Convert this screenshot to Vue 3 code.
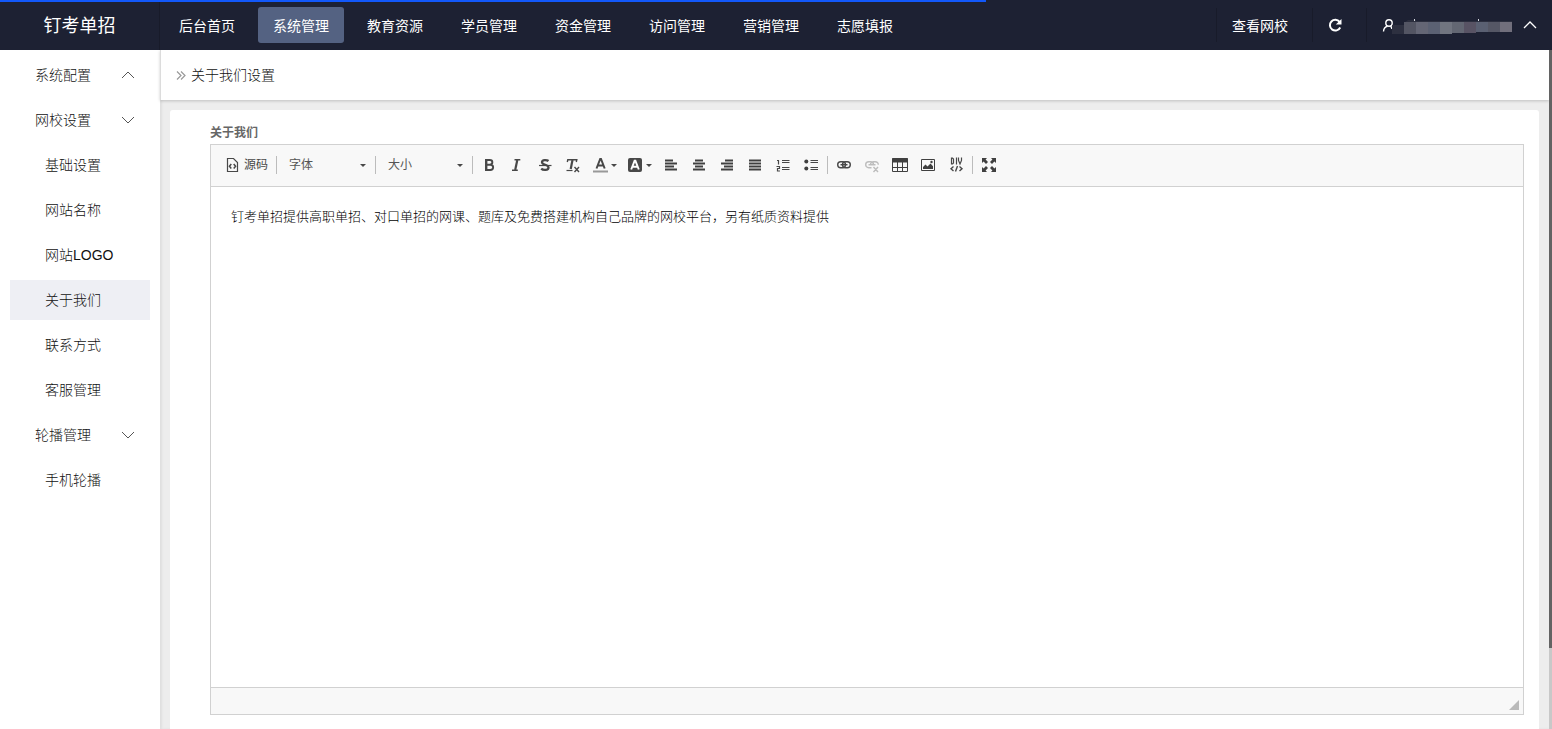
<script setup>
import { ref } from 'vue'

const topNav = ['后台首页', '系统管理', '教育资源', '学员管理', '资金管理', '访问管理', '营销管理', '志愿填报']
const activeTop = ref('系统管理')

const groups = ref([
  { name: '系统配置', arrow: 'up', items: [] },
  { name: '网校设置', arrow: 'down', items: ['基础设置', '网站名称', '网站LOGO', '关于我们', '联系方式', '客服管理'] },
  { name: '轮播管理', arrow: 'down', items: ['手机轮播'] }
])
const activeItem = ref('关于我们')

const progress = ref(63.5)

const alignTools = [
  { label: '左对齐', d: 'M2 3.5h8M2 6.5h12M2 9.5h9M2 12.5h12' },
  { label: '居中', d: 'M4 3.5h8M2 6.5h12M4 9.5h8M2 12.5h12' },
  { label: '右对齐', d: 'M6 3.5h8M2 6.5h12M5 9.5h9M2 12.5h12' },
  { label: '两端对齐', d: 'M2 3.5h12M2 6.5h12M2 9.5h12M2 12.5h12' }
]

/* Masked user name blocks: x, y, width, height, colour */
const mask = [
  [0, 7, 12, 9, '#2d3040'], [12, 4, 12, 12, '#535563'], [24, 4, 12, 12, '#646675'],
  [36, 4, 12, 12, '#5b6173'], [48, 4, 12, 12, '#717580'], [60, 4, 12, 11, '#636773'],
  [72, 4, 12, 11, '#585364'], [84, 4, 12, 10, '#5a6072'], [96, 4, 12, 10, '#555765'],
  [108, 4, 12, 10, '#716f7c']
]
</script>

<template>
  <div class="page">
    <header class="topbar">
      <div class="progress" :style="{ width: progress + '%' }"></div>
      <div class="brand">钉考单招</div>
      <nav class="topnav" aria-label="主导航">
        <a v-for="n in topNav" :key="n" href="#" :class="{ active: n === activeTop }" @click.prevent="activeTop = n">{{ n }}</a>
      </nav>
      <div class="actions">
        <a href="#" class="action view">查看网校</a>
        <button type="button" class="action reload" aria-label="刷新">
          <svg width="16" height="16" viewBox="0 0 16 16">
            <path d="M12.6 4.900A5.400 5.400 0 1 0 13.200 10.500" fill="none" stroke="#fff" stroke-width="2" />
            <path d="M14.500 2v5.600H8.800z" fill="#fff" />
          </svg>
        </button>
        <button type="button" class="action user" aria-label="用户菜单">
          <svg class="person" width="12" height="14" viewBox="0 0 12 14" fill="none" stroke="#fff" stroke-width="1.4">
            <circle cx="7" cy="5" r="3.200" />
            <path d="M1.500 13.500c.2-3 1.600-4.600 4-5.200M8.500 8c.8.8 1.200 1.600 1.400 3" />
          </svg>
          <svg class="mask" width="120" height="18" viewBox="0 0 120 18">
            <path d="M12 5l4-3h8v1h96v2z" fill="#2b2e3e" />
            <rect v-for="(m, i) in mask" :key="i" :x="m[0]" :y="m[1]" :width="m[2]" :height="m[3]" :fill="m[4]" />
            <path d="M22.500 1v2M86.500 1v2" stroke="#d5d7dd" />
          </svg>
          <svg class="caret" width="14" height="8" viewBox="0 0 14 8" fill="none" stroke="#fff" stroke-width="1.300">
            <path d="M1 7l6-6 6 6" />
          </svg>
        </button>
      </div>
    </header>

    <div class="body">
      <nav class="sidebar" aria-label="侧栏">
        <template v-for="g in groups" :key="g.name">
          <button type="button" class="group">
            <span>{{ g.name }}</span>
            <svg width="14" height="8" viewBox="0 0 14 8" fill="none" stroke="#555">
              <path :d="g.arrow === 'up' ? 'M1 7l6-6 6 6' : 'M1 1l6 6 6-6'" />
            </svg>
          </button>
          <a v-for="it in g.items" :key="it" href="#" class="item" :class="{ active: it === activeItem }" @click.prevent="activeItem = it">{{ it }}</a>
        </template>
      </nav>

      <main class="main">
        <div class="crumb">
          <svg width="10" height="12" viewBox="0 0 10 12" fill="none" stroke="#999" stroke-width="1.200">
            <path d="M1 2.500l4 4-4 4M5 2.500l4 4-4 4" />
          </svg>
          <h1>关于我们设置</h1>
        </div>

        <div class="content">
          <section class="card">
            <div id="about-label" class="label">关于我们</div>
            <div class="editor">
              <div class="toolbar" role="toolbar" aria-label="编辑器工具栏">
                <button type="button" class="source">
                  <svg width="16" height="16" viewBox="0 0 16 16" fill="none" stroke="#484848">
                    <path d="M3.500 1.500h6l4 4v9h-10z" stroke-width="1.200" />
                    <path d="M7.300 7L5.400 9.200l1.900 2.200M9.700 7l1.900 2.200-1.900 2.200" stroke-width="1.500" />
                  </svg>
                  源码
                </button>
                <i class="sep"></i>
                <div class="combo">
                  <select aria-label="字体"><option>字体</option></select>
                  <svg class="drop" width="6" height="3" viewBox="0 0 6 3"><path d="M0 0h6L3 3z" /></svg>
                </div>
                <i class="sep"></i>
                <div class="combo size">
                  <select aria-label="大小"><option>大小</option></select>
                  <svg class="drop" width="6" height="3" viewBox="0 0 6 3"><path d="M0 0h6L3 3z" /></svg>
                </div>
                <i class="sep"></i>
                <button type="button" class="tool" aria-label="加粗">
                  <svg width="16" height="16" viewBox="0 0 16 16" fill="none" stroke="#484848">
                    <path d="M5.200 3v10" stroke-width="2.400" />
                    <path d="M4 3h4.800c3.400 0 3.400 4.700 0 4.700H5H9.300c3.800 0 3.800 5.300 0 5.300H4" stroke-width="1.900" />
                  </svg>
                </button>
                <button type="button" class="tool" aria-label="倾斜">
                  <svg width="16" height="16" viewBox="0 0 16 16" fill="none" stroke="#484848">
                    <path d="M8.300 3L6.200 13" stroke-width="2.200" /><path d="M5.500 2.700h5.800M3 13.300h5.800" stroke-width="1.400" />
                  </svg>
                </button>
                <button type="button" class="tool" aria-label="删除线">
                  <svg width="16" height="16" viewBox="0 0 16 16" fill="none" stroke="#484848">
                    <path d="M11.500 4C10 2.800 5 2.300 5 5.200c0 2.900 6.500 2.200 6.500 5.200 0 3.300-5.500 3-7.300 1.300" stroke-width="2.300" />
                    <path d="M2 8.500h12.500" stroke-width="1.200" />
                  </svg>
                </button>
                <button type="button" class="tool" aria-label="清除格式">
                  <svg width="16" height="16" viewBox="0 0 16 16" fill="none" stroke="#484848">
                    <path d="M7.500 3L5.700 12" stroke-width="2.200" /><path d="M2.300 5l.5-2.300h9l-.5 2.300" stroke-width="1.400" />
                    <path d="M1.500 13.500h6" stroke-width="1.200" /><path d="M9.500 10l4.500 5M14 10l-4.500 5" stroke-width="1.400" />
                  </svg>
                </button>
                <button type="button" class="tool wide" aria-label="文本颜色">
                  <svg width="16" height="16" viewBox="0 0 16 16" fill="none" stroke="#484848">
                    <path d="M3.500 11.500L7.200 2h.8l3.700 9.500M5 8.500h5.500" stroke-width="2" />
                    <path d="M0 14.500h15" stroke="#999" stroke-width="2" />
                  </svg>
                  <svg class="drop" width="6" height="3" viewBox="0 0 6 3"><path d="M0 0h6L3 3z" /></svg>
                </button>
                <button type="button" class="tool wide" aria-label="背景颜色">
                  <svg width="16" height="16" viewBox="0 0 16 16" fill="none">
                    <rect x="0" y="1" width="14" height="14" rx="2" fill="#484848" />
                    <path d="M3.200 12.500L6.600 3.800h.8l3.400 8.700M4.500 9.800h5" stroke="#fff" stroke-width="1.900" />
                  </svg>
                  <svg class="drop" width="6" height="3" viewBox="0 0 6 3"><path d="M0 0h6L3 3z" /></svg>
                </button>
                <button v-for="a in alignTools" :key="a.label" type="button" class="tool" :aria-label="a.label">
                  <svg width="16" height="16" viewBox="0 0 16 16"><path :d="a.d" stroke="#404040" stroke-width="2" /></svg>
                </button>
                <button type="button" class="tool" aria-label="编号列表">
                  <svg width="16" height="16" viewBox="0 0 16 16" fill="none" stroke="#484848">
                    <path d="M7 3.500h7.500M7 5.500h7.500M7 10.500h7.500M7 12.500h7.500" />
                    <path d="M2 3.500h1.500v4M1.500 9.500H4.500v2h-2v2.500H5" stroke-width="1.200" />
                  </svg>
                </button>
                <button type="button" class="tool" aria-label="项目列表">
                  <svg width="16" height="16" viewBox="0 0 16 16">
                    <path d="M7.500 3.500h7.500M7.500 5.500h7.500M7.500 10.500h7.500M7.500 12.500h7.500" stroke="#484848" />
                    <circle cx="3.300" cy="4.500" r="2" fill="#404040" /><circle cx="3.300" cy="11.500" r="2" fill="#404040" />
                  </svg>
                </button>
                <i class="sep"></i>
                <button type="button" class="tool" aria-label="插入链接">
                  <svg width="16" height="16" viewBox="0 0 16 16" fill="none" stroke="#484848" stroke-width="1.400">
                    <rect x="1.700" y="4.700" width="7.800" height="6" rx="3" /><rect x="6.500" y="4.700" width="7.800" height="6" rx="3" />
                    <path d="M4.500 7.700h7" />
                  </svg>
                </button>
                <button type="button" class="tool" aria-label="取消链接" disabled>
                  <svg width="16" height="16" viewBox="0 0 16 16" fill="none" stroke="#bdbdbd" stroke-width="1.400">
                    <path d="M7.500 10.700H4.700a3 3 0 0 1 0-6h1.800a3 3 0 0 1 3 3M6.500 7.700a3 3 0 0 1 3-3h1.800a3 3 0 0 1 3 3M4.500 7.700h7M9.500 10l4.500 5M14 10l-4.500 5" />
                  </svg>
                </button>
                <button type="button" class="tool" aria-label="表格">
                  <svg width="16" height="16" viewBox="0 0 16 16" fill="none" stroke="#404040">
                    <path d="M.5 1.500h15v13H.5zM.5 10.500h15M5.500 5v9.500M10.500 5v9.500" /><path d="M0 3.500h16" stroke-width="4" />
                  </svg>
                </button>
                <button type="button" class="tool" aria-label="图像">
                  <svg width="16" height="16" viewBox="0 0 16 16">
                    <path d="M1.500 2.500h13v11h-13z" fill="none" stroke="#404040" />
                    <path d="M3 12V10l2.500-2.500 2 2L10.500 6.500l2.500 2.800V12z" fill="#404040" /><circle cx="11.500" cy="5" r="1.200" fill="#404040" />
                  </svg>
                </button>
                <button type="button" class="tool" aria-label="创建 DIV 容器">
                  <svg width="16" height="16" viewBox="0 0 16 16" fill="none" stroke="#484848" stroke-width="1.200">
                    <path d="M3.500 1v6h1l1-1V2l-1-1zM8.500 .5v7M10.500 .5v3L12 7l1.500-3.500v-3" />
                    <path d="M5.500 9.500L3 11.700 5.500 14M11.500 9.500l2.500 2.200-2.500 2.300M9.500 9L7.500 14.500" stroke-width="1.400" />
                  </svg>
                </button>
                <i class="sep"></i>
                <button type="button" class="tool" aria-label="最大化">
                  <svg width="16" height="16" viewBox="0 0 16 16">
                    <path d="M1 1h5L4.600 2.600 7 5 5 7 2.600 4.600 1 6zM15 1v5l-1.600-1.400L11 7 9 5l2.400-2.400L10 1zM1 15v-5l1.600 1.400L5 9l2 2-2.400 2.400L6 15zM15 15h-5l1.400-1.600L9 11l2-2 2.400 2.400L15 10z" fill="#404040" />
                  </svg>
                </button>
              </div>
              <div class="text" role="textbox" aria-multiline="true" aria-labelledby="about-label" contenteditable="true">
                <p>钉考单招提供高职单招、对口单招的网课、题库及免费搭建机构自己品牌的网校平台，另有纸质资料提供</p>
              </div>
              <div class="status">
                <svg width="10" height="10" viewBox="0 0 10 10"><path d="M10 0v10H0z" fill="#bababa" /></svg>
              </div>
            </div>
          </section>
        </div>
      </main>
      <div class="scroll"><div class="thumb"></div></div>
    </div>
  </div>
</template>

<style>
body {
  overflow: hidden;
}
</style>

<style scoped>
.page {
  height: 100vh;
  display: flex;
  flex-direction: column;
  font-family: "Liberation Sans", "Noto Sans CJK SC", sans-serif;
  font-size: 14px;
  font-weight: 300;
  color: #111;
  background: #fff;
}
.page * {
  box-sizing: border-box;
}
a {
  color: inherit;
  text-decoration: none;
}
button {
  padding: 0;
  border: 0;
  background: none;
  font: inherit;
  color: inherit;
}
svg {
  display: block;
  flex: none;
}
.topbar {
  position: relative;
  flex: none;
  height: 50px;
  display: flex;
  align-items: center;
  background: #1d2133;
  color: #fff;
  font-weight: 400;
}
.progress {
  position: absolute;
  top: 0;
  left: 0;
  height: 2px;
  background: #1258fa;
}
.brand {
  width: 160px;
  height: 50px;
  line-height: 52px;
  border-right: 1px solid #181b2a;
  text-align: center;
  font-size: 18px;
}
.topnav {
  display: flex;
  gap: 8px;
  padding-left: 4px;
}
.topnav a {
  height: 36px;
  padding: 0 15px;
  line-height: 38px;
  border-radius: 3px;
}
.topnav a.active {
  background: #546282;
}
.actions {
  margin-left: auto;
  display: flex;
  padding-right: 15px;
}
.action {
  height: 34px;
  display: flex;
  align-items: center;
  border-left: 1px solid #181b2a;
}
.view {
  width: 96px;
  padding-left: 15px;
}
.reload {
  width: 54px;
  padding-left: 14px;
}
.user {
  padding-left: 15px;
}
.mask {
  margin: 4px 11px 0 -2px;
}
.body {
  flex: 1;
  min-height: 0;
  display: flex;
}
.sidebar {
  width: 160px;
  flex: none;
  padding: 5px 10px;
  display: flex;
  flex-direction: column;
  gap: 5px;
}
.group,
.item {
  height: 40px;
  line-height: 40px;
}
.group {
  display: flex;
  align-items: center;
  justify-content: space-between;
  padding: 0 15px 0 25px;
}
.item {
  padding-left: 35px;
}
.item.active {
  background: #eeeff4;
}
.main {
  flex: 1;
  min-width: 0;
  display: flex;
  flex-direction: column;
  background: #ededed;
  box-shadow: inset 2px 0 2px #e0e0e0;
}
.crumb {
  height: 50px;
  flex: none;
  display: flex;
  align-items: center;
  gap: 5px;
  padding-left: 15px;
  border-left: 1px solid #dcdcdc;
  background: #fff;
  box-shadow: 0 1px 3px rgba(0, 0, 0, 0.2);
}
.crumb h1 {
  margin: 0;
  line-height: 20px;
  font-size: 14px;
  font-weight: inherit;
}
.content {
  flex: 1;
  min-height: 0;
  overflow: hidden;
  padding: 10px 10px 0;
}
.card {
  min-height: 100%;
  padding: 12px 15px 14px 40px;
  border-radius: 3px 3px 0 0;
  background: #fff;
}
.label {
  height: 22px;
  line-height: 22px;
  font-size: 12px;
  font-weight: 700;
  color: #666;
}
.editor {
  border: 1px solid #d1d1d1;
}
.toolbar {
  height: 42px;
  display: flex;
  align-items: center;
  padding: 0 7px 1px;
  border-bottom: 1px solid #d1d1d1;
  background: #f8f8f8;
  font-size: 12px;
  font-weight: 400;
  color: #484848;
}
.source {
  width: 56px;
  height: 28px;
  line-height: 28px;
  display: flex;
  align-items: center;
  justify-content: center;
  gap: 4px;
  white-space: nowrap;
}
.sep {
  width: 1px;
  height: 18px;
  margin: 0 2px;
  background: #bcbcbc;
}
.combo {
  width: 94px;
  height: 28px;
  display: flex;
  align-items: center;
  padding: 0 7px 0 10px;
}
.combo.size {
  width: 92px;
}
.combo select {
  flex: 1;
  min-width: 0;
  height: 26px;
  padding: 0;
  border: 0;
  appearance: none;
  background: none;
  font: inherit;
  color: #555;
}
.drop {
  fill: #484848;
}
.tool {
  width: 28px;
  height: 28px;
  display: flex;
  align-items: center;
  justify-content: center;
}
.tool.wide {
  width: 35px;
  gap: 2px;
}
.text {
  height: 500px;
  padding: 20px;
  font-size: 13px;
  line-height: 20px;
  color: #000;
  outline: none;
}
.text p {
  margin: 0;
}
.status {
  height: 27px;
  display: flex;
  align-items: flex-end;
  justify-content: flex-end;
  padding: 4px;
  border-top: 1px solid #d1d1d1;
  background: #f8f8f8;
}
.scroll {
  width: 3px;
  flex: none;
  background: #c8c8c8;
}
.thumb {
  height: 88%;
  background: #636363;
}
</style>
